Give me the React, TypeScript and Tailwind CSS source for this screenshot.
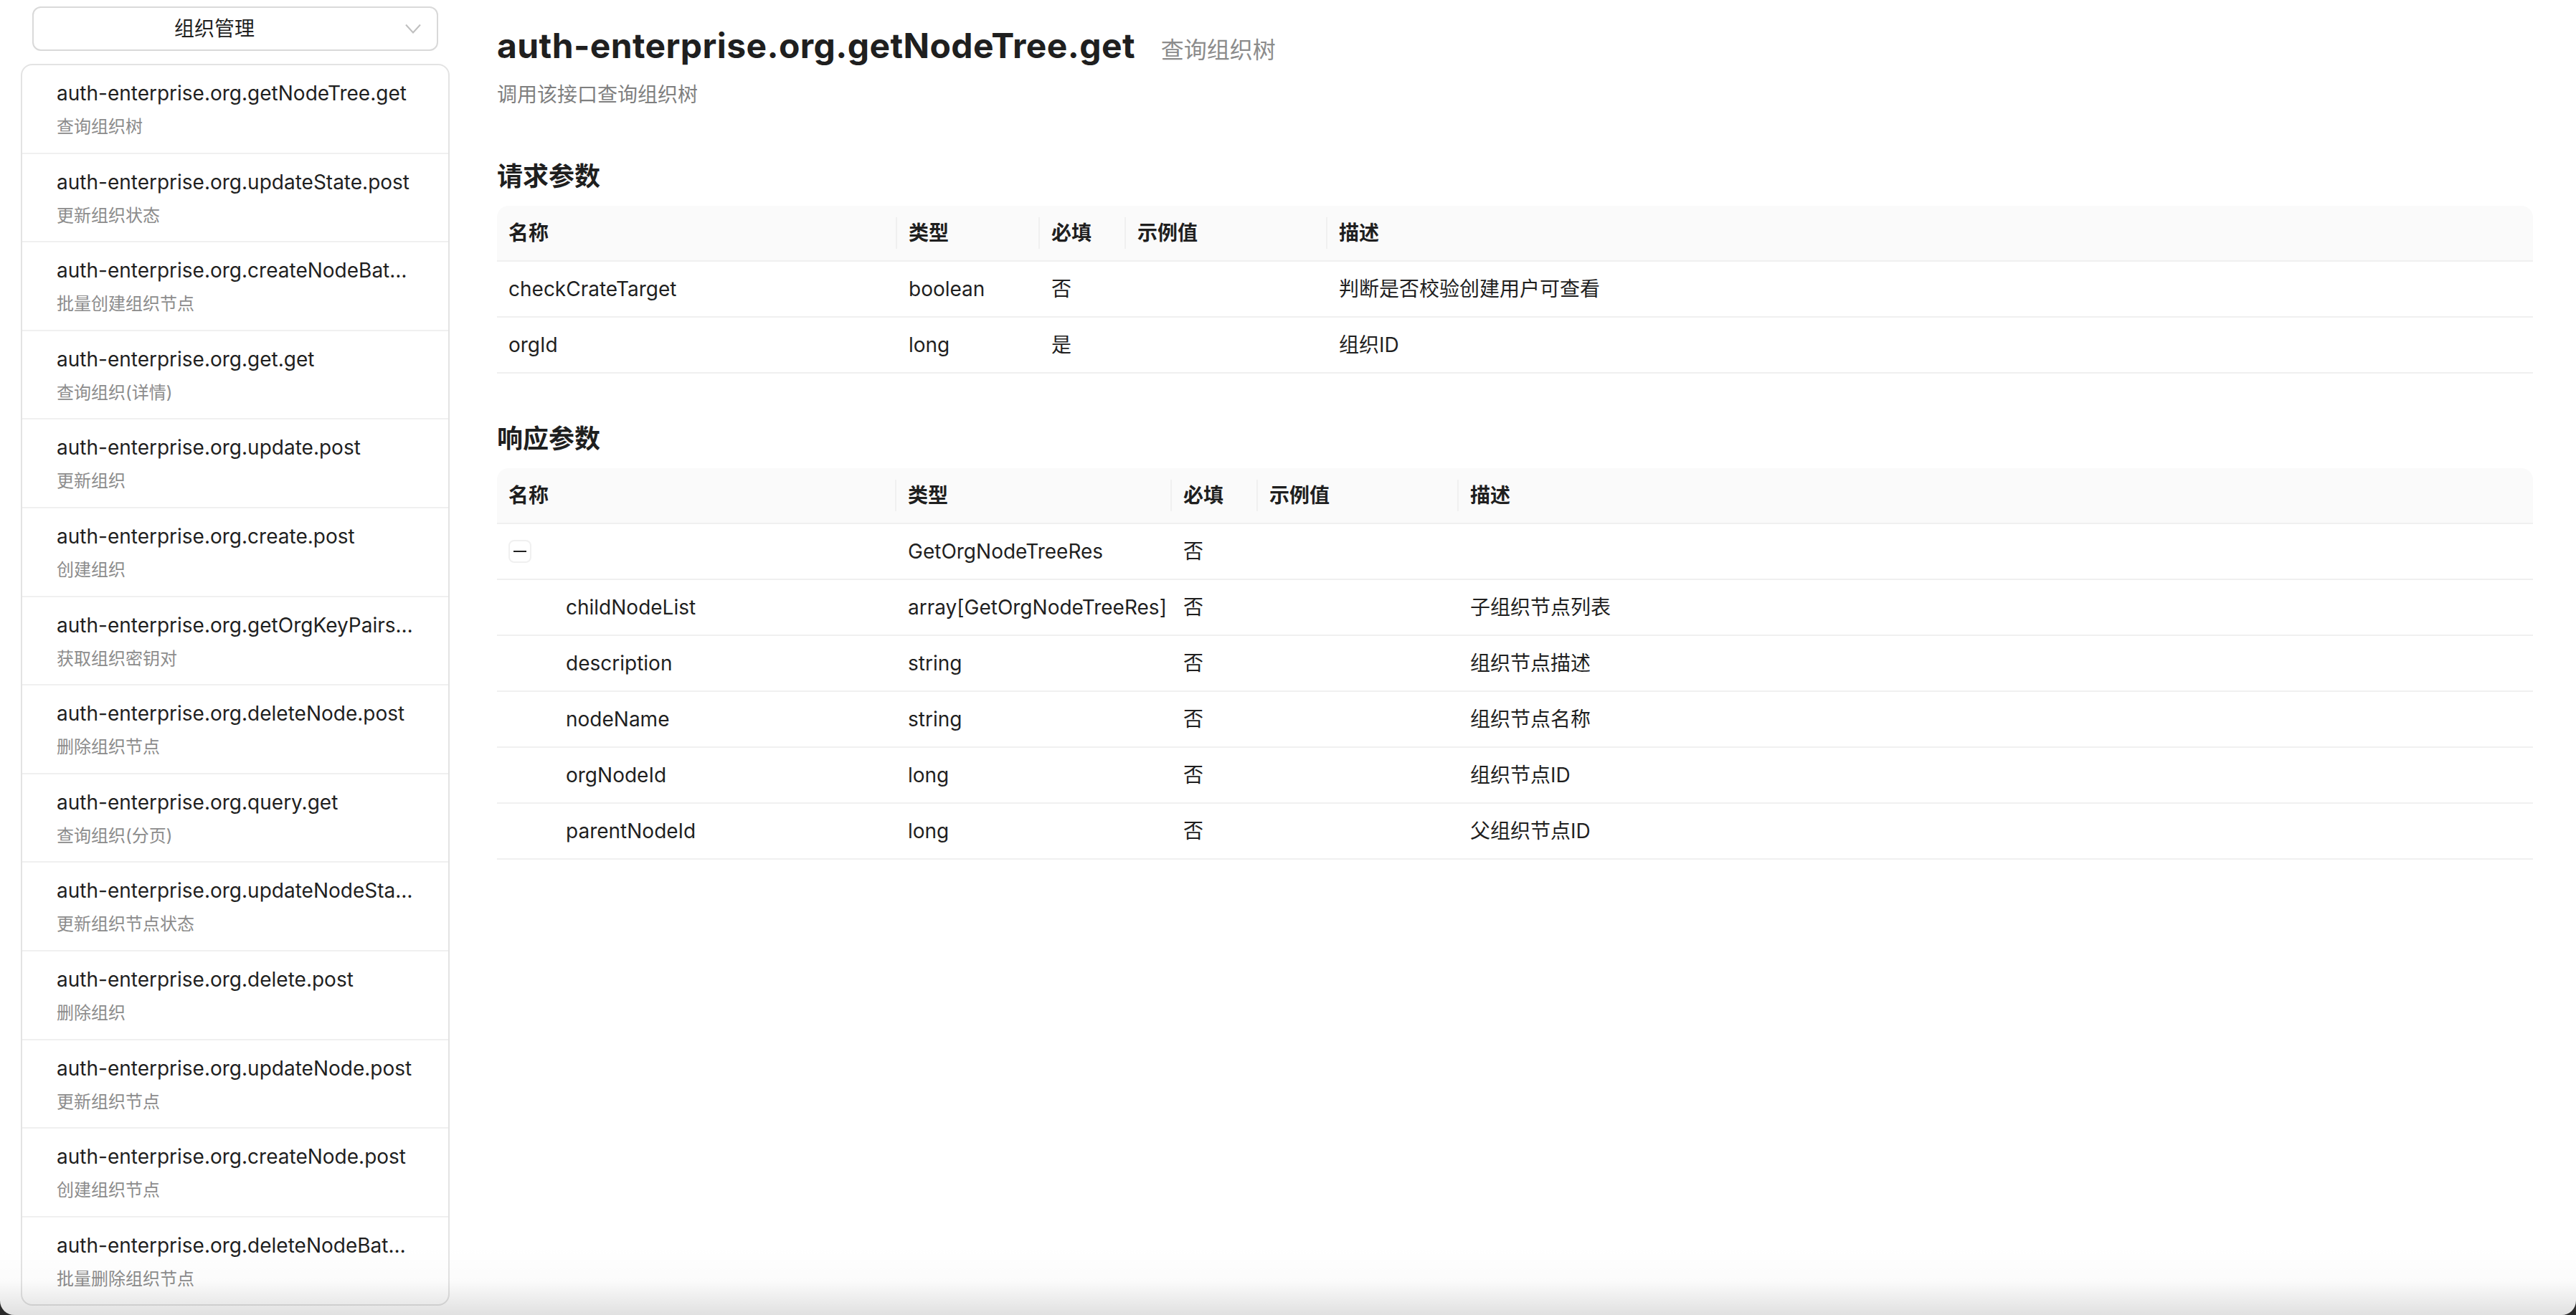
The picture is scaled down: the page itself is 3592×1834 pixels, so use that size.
import { Fragment } from "react";

const apis = [
  { name: "auth-enterprise.org.getNodeTree.get", desc: "查询组织树" },
  { name: "auth-enterprise.org.updateState.post", desc: "更新组织状态" },
  { name: "auth-enterprise.org.createNodeBat…", desc: "批量创建组织节点" },
  { name: "auth-enterprise.org.get.get", desc: "查询组织(详情)" },
  { name: "auth-enterprise.org.update.post", desc: "更新组织" },
  { name: "auth-enterprise.org.create.post", desc: "创建组织" },
  { name: "auth-enterprise.org.getOrgKeyPairs…", desc: "获取组织密钥对" },
  { name: "auth-enterprise.org.deleteNode.post", desc: "删除组织节点" },
  { name: "auth-enterprise.org.query.get", desc: "查询组织(分页)" },
  { name: "auth-enterprise.org.updateNodeSta…", desc: "更新组织节点状态" },
  { name: "auth-enterprise.org.delete.post", desc: "删除组织" },
  { name: "auth-enterprise.org.updateNode.post", desc: "更新组织节点" },
  { name: "auth-enterprise.org.createNode.post", desc: "创建组织节点" },
  { name: "auth-enterprise.org.deleteNodeBat…", desc: "批量删除组织节点" },
];

type Row = { name: string; type: string; required: string; example: string; desc: string; child?: boolean; parent?: boolean };

const requestRows: Row[] = [
  { name: "checkCrateTarget", type: "boolean", required: "否", example: "", desc: "判断是否校验创建用户可查看" },
  { name: "orgId", type: "long", required: "是", example: "", desc: "组织ID" },
];

const responseRows: Row[] = [
  { name: "", type: "GetOrgNodeTreeRes", required: "否", example: "", desc: "", parent: true },
  { name: "childNodeList", type: "array[GetOrgNodeTreeRes]", required: "否", example: "", desc: "子组织节点列表", child: true },
  { name: "description", type: "string", required: "否", example: "", desc: "组织节点描述", child: true },
  { name: "nodeName", type: "string", required: "否", example: "", desc: "组织节点名称", child: true },
  { name: "orgNodeId", type: "long", required: "否", example: "", desc: "组织节点ID", child: true },
  { name: "parentNodeId", type: "long", required: "否", example: "", desc: "父组织节点ID", child: true },
];

const headers = ["名称", "类型", "必填", "示例值", "描述"];

function ParamTable({ rows, widths }: { rows: Row[]; widths: number[] }) {
  return (
    <table className="w-full table-fixed border-separate border-spacing-0 text-[28px] text-[#1f1f1f]">
      <colgroup>
        {widths.map((w, i) => (
          <col key={i} style={{ width: w }} />
        ))}
        <col />
      </colgroup>
      <thead>
        <tr>
          {headers.map((h, i) => (
            <th
              key={h}
              className={`relative h-[78px] border-b-2 border-[#f0f0f0] bg-[#fafafa] px-[16px] text-left font-semibold ${
                i === 0 ? "rounded-tl-[16px]" : ""
              } ${
                i === headers.length - 1
                  ? "rounded-tr-[16px]"
                  : "before:absolute before:right-0 before:top-1/2 before:h-[44px] before:w-[2px] before:-translate-y-1/2 before:bg-[#f0f0f0] before:content-['']"
              }`}
            >
              {h}
            </th>
          ))}
        </tr>
      </thead>
      <tbody>
        {rows.map((r, i) => (
          <Fragment key={i}>
            <tr>
              <td className={`h-[78px] border-b-2 border-[#f0f0f0] pr-[16px] ${r.child ? "pl-[96px]" : "pl-[16px]"}`}>
                {r.parent ? (
                  <span className="flex h-[32px] w-[32px] items-center justify-center rounded-[8px] border-2 border-[#f0f0f0]">
                    <span className="h-[2px] w-[18px] bg-[#1f1f1f]" />
                  </span>
                ) : (
                  r.name
                )}
              </td>
              <td className="h-[78px] whitespace-nowrap border-b-2 border-[#f0f0f0] px-[16px]">{r.type}</td>
              <td className="h-[78px] border-b-2 border-[#f0f0f0] px-[16px]">{r.required}</td>
              <td className="h-[78px] border-b-2 border-[#f0f0f0] px-[16px]">{r.example}</td>
              <td className="h-[78px] border-b-2 border-[#f0f0f0] px-[16px]">{r.desc}</td>
            </tr>
          </Fragment>
        ))}
      </tbody>
    </table>
  );
}

export default function App() {
  return (
    <div className="h-screen w-full bg-[#2b2b2b] font-['Inter','Noto_Sans_CJK_SC',sans-serif]">
      <div className="relative flex h-full w-full overflow-hidden rounded-b-[20px] bg-white">
        {/* Sidebar */}
        <aside className="flex w-[627px] shrink-0 flex-col pl-[29px] pt-[9px]">
          <div className="mx-[16px] flex h-[62px] items-center rounded-[12px] border-2 border-[#d9d9d9] pl-[24px] pr-[22px]">
            <span className="flex-1 pr-[38px] text-center text-[28px] text-[#1f1f1f]">组织管理</span>
            <svg width="22" height="14" viewBox="0 0 22 14" fill="none" stroke="#bfbfbf" strokeWidth="2">
              <path d="M1 1.5l10 11 10-11" />
            </svg>
          </div>
          <ul className="mt-[18px] overflow-hidden rounded-[16px] border-2 border-[#e3e3e3]">
            {apis.map((a, i) => (
              <li
                key={a.name}
                className={`px-[48px] pb-[18.6px] pt-[21px] ${i < apis.length - 1 ? "border-b-2 border-[#f0f0f0]" : ""}`}
              >
                <div className="truncate text-[28px] leading-[36px] text-[#1f1f1f]">{a.name}</div>
                <div className="mt-[12px] text-[24px] leading-[34px] text-[#8c8c8c]">{a.desc}</div>
              </li>
            ))}
          </ul>
        </aside>

        {/* Main */}
        <main className="min-w-0 flex-1 pl-[66px] pr-[60px] pt-[36px]">
          <div className="flex items-baseline gap-[36px]">
            <h1 className="text-[48px] font-bold leading-[56px] tracking-[0.4px] text-[#1f1f1f]">
              auth-enterprise.org.getNodeTree.get
            </h1>
            <span className="text-[32px] text-[#8c8c8c]">查询组织树</span>
          </div>
          <p className="mt-[18px] text-[28px] leading-[40px] text-[#7f7f7f]">调用该接口查询组织树</p>

          <h2 className="mt-[70px] text-[36px] font-semibold leading-[48px] text-[#1f1f1f]">请求参数</h2>
          <div className="mt-[17px]">
            <ParamTable rows={requestRows} widths={[558, 199, 120, 281]} />
          </div>

          <h2 className="mt-[67px] text-[36px] font-semibold leading-[48px] text-[#1f1f1f]">响应参数</h2>
          <div className="mt-[17px]">
            <ParamTable rows={responseRows} widths={[557, 384, 120, 280]} />
          </div>
        </main>

        <div className="pointer-events-none absolute inset-x-0 bottom-0 h-[96px] bg-linear-to-b from-transparent via-black/[0.015] to-black/[0.12]" />
      </div>
    </div>
  );
}
